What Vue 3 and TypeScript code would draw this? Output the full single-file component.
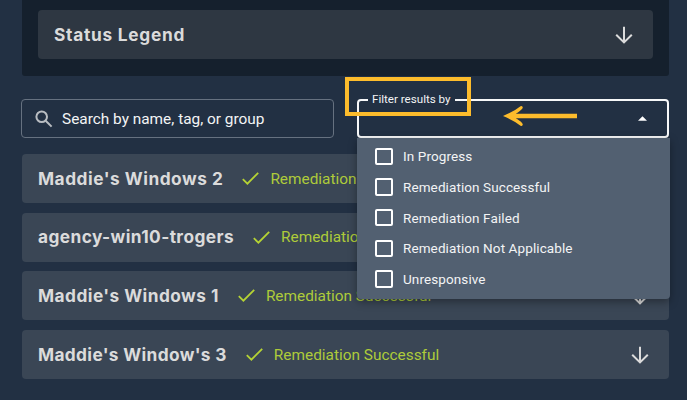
<script setup lang="ts">
import { ref } from 'vue'

interface Device {
  name: string
  tracking: number
}

const devices: Device[] = [
  { name: "Maddie's Windows 2", tracking: 0.52 },
  { name: 'agency-win10-trogers', tracking: 0.41 },
  { name: "Maddie's Windows 1", tracking: 0.46 },
  { name: "Maddie's Window's 3", tracking: 0.36 },
]

const options = ref<string[]>([
  'In Progress',
  'Remediation Successful',
  'Remediation Failed',
  'Remediation Not Applicable',
  'Unresponsive',
])
</script>

<template>
  <main class="page">
    <section class="legend-panel">
      <div class="legend">
        <h2 class="title legend-title">Status Legend</h2>
        <svg class="down" viewBox="0 0 18 18"><path d="M9 0.7V16.3M1.2 8.7L9 16.4L16.8 8.7" /></svg>
      </div>
    </section>

    <div class="filters">
      <div class="search">
        <svg class="magnifier" viewBox="0 0 18 18"><circle cx="6.7" cy="6.7" r="5.3" /><path d="M10.7 10.7L16.6 16.6" /></svg>
        <span>Search by name, tag, or group</span>
      </div>

      <div class="select">
        <span class="select-label">Filter results by</span>
        <svg class="caret" viewBox="0 0 10 5"><path d="M0 5L5 0L10 5Z" /></svg>
        <ul class="menu">
          <li v-for="option in options" :key="option" class="option">
            <span class="box"></span><span>{{ option }}</span>
          </li>
        </ul>
      </div>
    </div>

    <div class="rows">
      <article v-for="device in devices" :key="device.name" class="row">
        <h2 class="title" :style="{ letterSpacing: device.tracking + 'px' }">{{ device.name }}</h2>
        <svg class="check" viewBox="0 0 17 13"><path d="M0.8 7.2L5.4 11.7L16.2 0.9" /></svg>
        <span class="status">Remediation Successful</span>
        <svg class="down" viewBox="0 0 18 18"><path d="M9 0.7V16.3M1.2 8.7L9 16.4L16.8 8.7" /></svg>
      </article>
    </div>

    <div class="highlight"></div>
    <svg class="pointer" viewBox="0 0 75 22"><path d="M74 11H10" /><path class="head" d="M0 11Q11 6.5 17.5 1.2Q19.5 0.3 19.8 2.5Q19.5 4.5 13 8.8V13.2Q19.5 17.3 19.8 19.5Q19.5 21.6 17.5 20.7Q11 15.5 0 11Z" /></svg>
  </main>
</template>

<style>
body { margin: 0; background: #223043; }
</style>

<style scoped>
* { box-sizing: border-box; }
.page {
  position: relative;
  width: 687px;
  height: 400px;
  padding: 0 18px 0 22px;
  overflow: hidden;
  background: #223043;
  color: #f3f4f5;
  font-family: Roboto, "Liberation Sans", sans-serif;
}
.legend-panel {
  height: 76px;
  padding: 10px 16.5px 0 16px;
  border-radius: 0 0 3px 3px;
  background: #15202d;
}
.legend {
  display: flex;
  align-items: center;
  height: 49px;
  padding: 0 19.5px 0 16px;
  border-radius: 4px;
  background: #2e3742;
}
.title {
  margin: 0;
  font: 700 17.3px/24px Inter, "Open Sans", sans-serif;
  color: #dbdbdb;
  white-space: nowrap;
}
.legend-title { letter-spacing: 0.74px; }
.down {
  width: 18px;
  height: 18px;
  margin-left: auto;
  fill: none;
  stroke: #dbdbdb;
  stroke-width: 2;
}
.filters {
  display: flex;
  gap: 23px;
  height: 39px;
  margin: 23px 0 0 -1px;
}
.search {
  display: flex;
  align-items: center;
  width: 313px;
  padding-left: 13px;
  border: 1px solid #667180;
  border-radius: 4px;
  font-size: 15.4px;
}
.magnifier {
  width: 18px;
  height: 18px;
  margin-right: 9px;
  fill: none;
  stroke: #b9bdc2;
  stroke-width: 2;
}
.select {
  position: relative;
  display: flex;
  align-items: center;
  justify-content: flex-end;
  width: 312px;
  padding-right: 20px;
  border: 2px solid #f7f8f9;
  border-radius: 4px;
}
.select-label {
  position: absolute;
  top: -10px;
  left: 9px;
  padding: 0 4px;
  background: #223043;
  font-size: 11.6px;
  line-height: 16px;
  white-space: nowrap;
}
.caret { width: 9px; height: 5px; fill: #fff; }
.menu {
  position: absolute;
  z-index: 2;
  top: 37px;
  left: -2px;
  width: 313px;
  height: 161px;
  margin: 0;
  padding: 3px 0 0 18px;
  list-style: none;
  background: #526071;
  border-radius: 0 0 4px 4px;
  box-shadow: 0 3px 8px rgba(0, 0, 0, 0.35);
}
.option {
  display: flex;
  align-items: center;
  gap: 10.5px;
  height: 30.7px;
  font-size: 13.5px;
  letter-spacing: 0.1px;
}
.box {
  width: 17.5px;
  height: 17.5px;
  border: 2px solid #fff;
  border-radius: 2px;
}
.rows {
  display: flex;
  flex-direction: column;
  gap: 9.7px;
  margin-top: 16px;
}
.row {
  display: flex;
  align-items: center;
  height: 49px;
  padding: 0 20px 0 16px;
  border-radius: 4px;
  background: #3a4655;
}
.check {
  width: 17px;
  height: 13px;
  margin: 0 11px 0 19px;
  fill: none;
  stroke: #b5d334;
  stroke-width: 1.8;
}
.status { color: #aecb3a; font-size: 15.4px; white-space: nowrap; }
.highlight {
  position: absolute;
  z-index: 3;
  top: 77px;
  left: 345px;
  width: 126px;
  height: 39px;
  border: 4px solid #fdbc2c;
}
.pointer {
  position: absolute;
  z-index: 3;
  top: 105px;
  left: 503px;
  width: 75px;
  height: 22px;
  stroke: #fdbc2c;
  stroke-width: 4.5;
}
.pointer .head { fill: #fdbc2c; stroke: none; }
</style>
